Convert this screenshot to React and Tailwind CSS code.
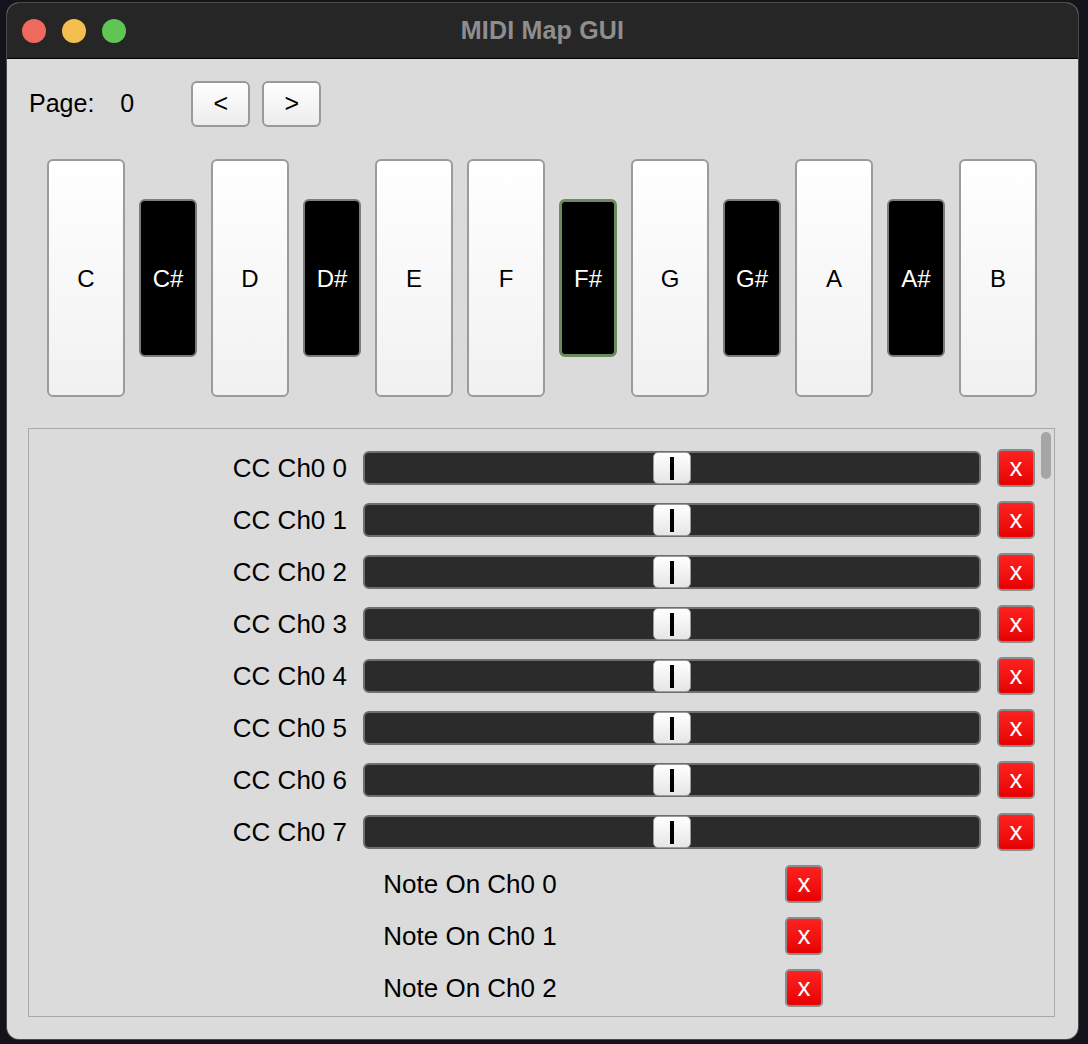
import React from 'react';

const font = { fontFamily: '"Liberation Sans", Arial, sans-serif' };

const keys = [
  { n: 'C' }, { n: 'C#', b: true }, { n: 'D' }, { n: 'D#', b: true }, { n: 'E' },
  { n: 'F' }, { n: 'F#', b: true, sel: true }, { n: 'G' }, { n: 'G#', b: true },
  { n: 'A' }, { n: 'A#', b: true }, { n: 'B' },
];

const XButton = () => (
  <button className="w-[38px] h-[38px] shrink-0 rounded-[5px] border-2 border-[#8c8c8c] bg-gradient-to-b from-[#ff2020] to-[#e60000] text-white text-[26px] leading-none flex items-center justify-center pb-[3px]">
    x
  </button>
);

const Slider = () => (
  <div className="w-[618px] h-[34px] rounded-[6px] border-2 border-[#6e6e6e] bg-[#2b2b2b] flex items-center justify-center">
    <div className="w-[38px] h-[32px] shrink-0 rounded-[5px] border-[1.5px] border-[#9a9a9a] bg-gradient-to-b from-white to-[#e6e6e6] flex items-center justify-center">
      <div className="w-[4px] h-[23px] bg-black" />
    </div>
  </div>
);

const CcRow = ({ i }) => (
  <div className="h-[52px] flex items-center">
    <div className="w-[318px] text-right text-[26px] text-black">CC Ch0 {i}</div>
    <div className="ml-[16px]"><Slider /></div>
    <div className="ml-[16px]"><XButton /></div>
  </div>
);

const NoteRow = ({ i }) => (
  <div className="h-[52px] flex items-center">
    <div className="ml-[151px] w-[580px] text-center text-[26px] text-black">Note On Ch0 {i}</div>
    <div className="ml-[25px]"><XButton /></div>
  </div>
);

export default function App() {
  return (
    <div className="w-[1088px] h-[1044px] bg-[#13131b] pt-[3px] pl-[7px] overflow-hidden" style={font}>
      <div className="w-[1071px] h-[1036px] rounded-[12px] overflow-hidden bg-[#dbdbdb] shadow-[0_0_0_1px_#4a4a4a] flex flex-col">
        {/* title bar */}
        <div className="h-[56px] shrink-0 bg-[#262626] border-b border-black grid grid-cols-[1fr_auto_1fr] items-center">
          <div className="flex items-center gap-[16px] pl-[15px]">
            <div className="w-[24px] h-[24px] rounded-full bg-[#ee6a5f]" />
            <div className="w-[24px] h-[24px] rounded-full bg-[#f5bf4f]" />
            <div className="w-[24px] h-[24px] rounded-full bg-[#61c554]" />
          </div>
          <div className="text-[25px] font-bold text-[#8e8e8e] tracking-[0.2px]">MIDI Map GUI</div>
          <div />
        </div>

        {/* page row */}
        <div className="mt-[22px] h-[46px] flex items-center pl-[22px] text-[25px] text-black">
          <span>Page:</span>
          <span className="ml-[26px]">0</span>
          <button className="ml-[57px] w-[59px] h-[46px] rounded-[6px] border-2 border-[#9a9a9a] bg-gradient-to-b from-white to-[#ececec] text-[25px] flex items-center justify-center">&lt;</button>
          <button className="ml-[12px] w-[59px] h-[46px] rounded-[6px] border-2 border-[#9a9a9a] bg-gradient-to-b from-white to-[#ececec] text-[25px] flex items-center justify-center">&gt;</button>
        </div>

        {/* keyboard */}
        <div className="mt-[32px] ml-[40px] flex items-center gap-[14px] h-[238px]">
          {keys.map((k) =>
            k.b ? (
              <div
                key={k.n}
                className={
                  k.sel
                    ? 'w-[58px] h-[158px] rounded-[6px] border-[3px] border-[#6b8a5e] bg-black text-white text-[24px] flex items-center justify-center pt-[2px]'
                    : 'w-[58px] h-[158px] rounded-[6px] border-2 border-[#7c7c7c] bg-black text-white text-[24px] flex items-center justify-center pt-[2px]'
                }
              >
                {k.n}
              </div>
            ) : (
              <div
                key={k.n}
                className="w-[78px] h-[238px] rounded-[6px] border-2 border-[#9b9b9b] bg-gradient-to-b from-white to-[#f1f1f1] text-black text-[24px] flex items-center justify-center pt-[2px]"
              >
                {k.n}
              </div>
            )
          )}
        </div>

        {/* mapping list */}
        <div className="mt-[31px] ml-[21px] w-[1027px] h-[589px] border border-[#a9a9a9] relative overflow-hidden">
          <div className="pt-[13px]">
            {[0, 1, 2, 3, 4, 5, 6, 7].map((i) => (
              <CcRow key={i} i={i} />
            ))}
            {[0, 1, 2].map((i) => (
              <NoteRow key={i} i={i} />
            ))}
          </div>
          <div className="absolute top-[3px] right-[3px] w-[10px] h-[47px] rounded-full bg-[#a6a6a6]" />
        </div>
      </div>
    </div>
  );
}
